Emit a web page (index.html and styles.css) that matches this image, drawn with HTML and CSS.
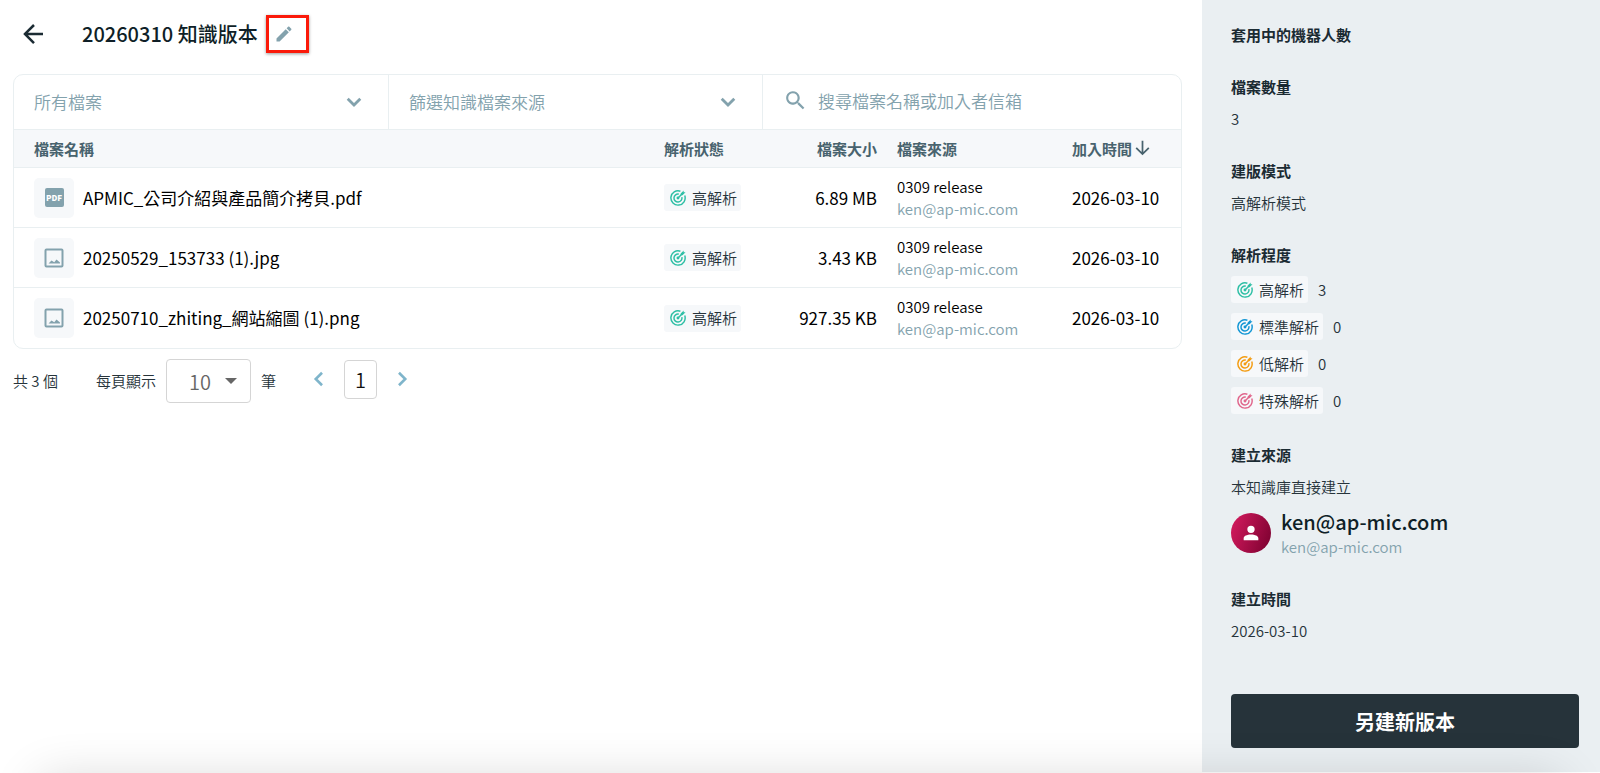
FILE: index.html
```
<!DOCTYPE html>
<html lang="zh-Hant">
<head>
    <meta charset="utf-8">
    <title>20260310 知識版本</title>
    <link rel="stylesheet" href="styles.css">
</head>
<body>
<!-- shared icons -->
<svg class="sprite" aria-hidden="true">
    <symbol id="icon-target" viewBox="0 0 24 24">
        <g fill="none" stroke="currentColor" stroke-width="2.200">
            <path d="M15.600 1.900A10.700 10.700 0 1 0 22.100 8.400"/>
            <path d="M13.300 6.200A6 6 0 1 0 17.800 10.700"/>
            <path d="M12 12L18 6"/>
        </g>
        <circle cx="12" cy="12" r="2.200" fill="currentColor"/>
        <path d="M16 5.200L20.500.700V3.500h2.800l-4.500 4.500H16z" fill="currentColor"/>
    </symbol>
    <symbol id="icon-image" viewBox="0 0 24 24">
        <path d="M19.500 19.500h-15v-15h15m0-2h-15a2 2 0 0 0-2 2v15a2 2 0 0 0 2 2h15a2 2 0 0 0 2-2v-15a2 2 0 0 0-2-2m-5 11l-2.250 2.800L9.500 14.500 6.500 17.500h11.500v-1z" fill="currentColor"/>
    </symbol>
    <symbol id="icon-chevron" viewBox="0 0 24 24">
        <path d="M6.200 9L12 14.800 17.800 9" fill="none" stroke="currentColor" stroke-width="2.600"/>
    </symbol>
</svg>
<div class="page">
    <main class="main">
        <header class="top-bar">
            <button class="icon-btn back-btn" type="button" aria-label="返回">
                <svg width="30" height="30" viewBox="0 0 24 24"><path d="M20 11v2H8l5.500 5.500-1.420 1.420L4.160 12l7.920-7.920L13.500 5.500 8 11z" fill="currentColor"/></svg>
            </button>
            <h1 class="page-title">20260310 知識版本</h1>
            <button class="icon-btn edit-btn" type="button" aria-label="編輯名稱">
                <svg width="20" height="20" viewBox="0 0 24 24"><path d="M20.710 7.040c.390-.390.390-1.040 0-1.410l-2.340-2.340c-.370-.390-1.020-.390-1.410 0l-1.840 1.830 3.750 3.750M3 17.250V21h3.750L17.810 9.930l-3.750-3.750z" fill="currentColor"/></svg>
            </button>
        </header>

        <section class="card">
            <div class="filters">
                <div class="filter">
                    <select class="filter-select" aria-label="檔案類型"><option>所有檔案</option></select>
                    <svg class="filter-arrow" width="26" height="26"><use href="#icon-chevron"/></svg>
                </div>
                <div class="filter">
                    <select class="filter-select" aria-label="檔案來源"><option>篩選知識檔案來源</option></select>
                    <svg class="filter-arrow" width="26" height="26"><use href="#icon-chevron"/></svg>
                </div>
                <div class="search">
                    <svg width="25" height="25" viewBox="0 0 24 24"><path d="M9.500 3a6.500 6.500 0 0 1 4.940 10.730l.270.270h.790l5 5-1.500 1.500-5-5v-.790l-.270-.270A6.500 6.500 0 1 1 9.500 3m0 2a4.500 4.500 0 1 0 0 9 4.500 4.500 0 0 0 0-9" fill="currentColor"/></svg>
                    <input class="search-input" type="text" aria-label="搜尋" placeholder="搜尋檔案名稱或加入者信箱">
                </div>
            </div>
            <table class="files">
                <thead>
                <tr>
                    <th class="col-name">檔案名稱</th>
                    <th class="col-status">解析狀態</th>
                    <th class="col-size">檔案大小</th>
                    <th class="col-source">檔案來源</th>
                    <th class="col-date">
                        <div class="sort">加入時間<svg width="21" height="21" viewBox="0 0 24 24"><path d="M11 3h2v13l5.500-5.500 1.420 1.420L12 19.840l-7.920-7.920L5.500 10.500 11 16z" fill="currentColor"/></svg></div>
                    </th>
                </tr>
                </thead>
                <tbody>
                <tr>
                    <td>
                        <div class="file">
                            <span class="file-icon"><span class="pdf">PDF</span></span>
                            APMIC_公司介紹與產品簡介拷貝.pdf
                        </div>
                    </td>
                    <td><span class="chip"><svg class="target high" width="16" height="16"><use href="#icon-target"/></svg>高解析</span></td>
                    <td class="col-size">6.89 MB</td>
                    <td>
                        <div class="source">0309 release</div>
                        <div class="source mail">ken@ap-mic.com</div>
                    </td>
                    <td>2026-03-10</td>
                </tr>
                <tr>
                    <td>
                        <div class="file">
                            <span class="file-icon"><svg width="24" height="24"><use href="#icon-image"/></svg></span>
                            20250529_153733 (1).jpg
                        </div>
                    </td>
                    <td><span class="chip"><svg class="target high" width="16" height="16"><use href="#icon-target"/></svg>高解析</span></td>
                    <td class="col-size">3.43 KB</td>
                    <td>
                        <div class="source">0309 release</div>
                        <div class="source mail">ken@ap-mic.com</div>
                    </td>
                    <td>2026-03-10</td>
                </tr>
                <tr>
                    <td>
                        <div class="file">
                            <span class="file-icon"><svg width="24" height="24"><use href="#icon-image"/></svg></span>
                            20250710_zhiting_網站縮圖 (1).png
                        </div>
                    </td>
                    <td><span class="chip"><svg class="target high" width="16" height="16"><use href="#icon-target"/></svg>高解析</span></td>
                    <td class="col-size">927.35 KB</td>
                    <td>
                        <div class="source">0309 release</div>
                        <div class="source mail">ken@ap-mic.com</div>
                    </td>
                    <td>2026-03-10</td>
                </tr>
                </tbody>
            </table>
        </section>

        <nav class="pager">
            <span class="total">共 3 個</span>
            <label for="pageSize">每頁顯示</label>
            <div class="page-size">
                <select id="pageSize" class="page-size-select"><option>10</option></select>
                <svg class="page-size-arrow" width="12" height="6" viewBox="0 0 12 6"><path d="M0 0h12L6 6z" fill="currentColor"/></svg>
            </div>
            <span>筆</span>
            <div class="pages">
                <button class="icon-btn page-arrow" type="button" aria-label="上一頁"><svg width="26" height="26" viewBox="0 0 24 24"><path d="M14.800 6.200L9 12l5.800 5.800" fill="none" stroke="currentColor" stroke-width="2.400"/></svg></button>
                <button class="page-num" type="button">1</button>
                <button class="icon-btn page-arrow" type="button" aria-label="下一頁"><svg width="26" height="26" viewBox="0 0 24 24"><path d="M9.200 6.200L15 12l-5.800 5.800" fill="none" stroke="currentColor" stroke-width="2.400"/></svg></button>
            </div>
        </nav>
    </main>

    <aside class="side">
        <section class="info">
            <h2 class="info-title">套用中的機器人數</h2>
        </section>
        <section class="info">
            <h2 class="info-title">檔案數量</h2>
            <p class="info-text">3</p>
        </section>
        <section class="info">
            <h2 class="info-title">建版模式</h2>
            <p class="info-text">高解析模式</p>
        </section>
        <section class="info">
            <h2 class="info-title">解析程度</h2>
            <div class="level"><span class="chip"><svg class="target high" width="16" height="16"><use href="#icon-target"/></svg>高解析</span>3</div>
            <div class="level"><span class="chip"><svg class="target standard" width="16" height="16"><use href="#icon-target"/></svg>標準解析</span>0</div>
            <div class="level"><span class="chip"><svg class="target low" width="16" height="16"><use href="#icon-target"/></svg>低解析</span>0</div>
            <div class="level"><span class="chip"><svg class="target special" width="16" height="16"><use href="#icon-target"/></svg>特殊解析</span>0</div>
        </section>
        <section class="info">
            <h2 class="info-title">建立來源</h2>
            <p class="info-text">本知識庫直接建立</p>
            <div class="user">
                <span class="avatar"><svg width="22" height="22" viewBox="0 0 24 24"><path d="M12 4a4 4 0 1 1 0 8 4 4 0 0 1 0-8m0 9.500c4.400 0 8 1.800 8 4V20H4v-2.500c0-2.200 3.600-4 8-4" fill="currentColor"/></svg></span>
                <div>
                    <div class="user-name">ken@ap-mic.com</div>
                    <div class="user-mail">ken@ap-mic.com</div>
                </div>
            </div>
        </section>
        <section class="info">
            <h2 class="info-title">建立時間</h2>
            <p class="info-text">2026-03-10</p>
        </section>
        <button class="create-btn" type="button">另建新版本</button>
    </aside>
</div>
<div class="bottom-edge"></div>
</body>
</html>
```
FILE: styles.css
```
* {
    box-sizing: border-box;
}

body {
    margin: 0;
    background-color: #fff;
    color: #26333a;
    font-family: "Noto Sans CJK TC", "Noto Sans", sans-serif;
    font-size: 15px;
    line-height: 22px;
    font-weight: 350;
}

button, input, select {
    font-family: inherit;
    font-weight: inherit;
    margin: 0;
}

svg {
    display: block;
    flex: none;
}

.sprite {
    position: absolute;
    width: 0;
    height: 0;
}

.page {
    display: flex;
    min-height: 100vh;
}

.main {
    flex: 1;
    padding: 0 20px 0 13px;
}

/* title */
.top-bar {
    display: flex;
    align-items: center;
    height: 74px;
    padding: 0 0 6px 5px;
}

.icon-btn {
    display: flex;
    align-items: center;
    padding: 0;
    border: none;
    background: none;
    cursor: pointer;
}

.back-btn {
    color: #1b2b33;
}

.page-title {
    margin: 0 8px 0 34px;
    font-size: 20px;
    line-height: 28px;
    font-weight: 500;
    color: #0f1f27;
}

.edit-btn {
    width: 43px;
    height: 38px;
    padding-left: 5px;
    border: 3px solid #fb1a0a;
    box-shadow: 0 1px 3px rgba(0, 0, 0, 0.4);
    color: #83a2ad;
}

/* files */
.card {
    border: 1px solid #e9eff1;
    border-radius: 10px;
    overflow: hidden;
}

.filters {
    display: grid;
    grid-template-columns: 375px 374px 1fr;
    height: 55px;
    border-bottom: 1px solid #e9eff1;
    color: #83a2ad;
}

.filter {
    position: relative;
    border-right: 1px solid #e9eff1;
}

.filter-select {
    width: 100%;
    height: 100%;
    padding: 0 56px 2px 20px;
    border: none;
    background: none;
    appearance: none;
    font-size: 17px;
    color: #83a2ad;
}

.filter-arrow {
    position: absolute;
    top: 14px;
    right: 21px;
    pointer-events: none;
}

.search {
    display: flex;
    align-items: center;
    gap: 10px;
    padding: 0 20px 4px;
}

.search-input {
    flex: 1;
    min-width: 0;
    padding: 0;
    border: none;
    outline: none;
    font-size: 17px;
    color: #26333a;
}

.search-input::placeholder {
    color: #83a2ad;
}

.files {
    width: 100%;
    table-layout: fixed;
    border-collapse: separate;
    border-spacing: 0;
}

.files th {
    height: 38px;
    padding: 0 0 0 20px;
    background-color: #f6f8fa;
    border-bottom: 1px solid #e9eff1;
    font-size: 15px;
    font-weight: 700;
    text-align: left;
    color: #48636e;
}

.files td {
    height: 60px;
    padding: 0 0 0 20px;
    border-bottom: 1px solid #e9eff1;
    font-size: 17px;
    font-weight: 400;
    color: #000;
}

.files tr:last-child td {
    border-bottom: none;
}

.files .col-size {
    width: 126px;
    text-align: right;
}

.col-status {
    width: 107px;
}

.col-source {
    width: 175px;
}

.col-date {
    width: 129px;
}

.sort {
    display: flex;
    align-items: center;
}

.file {
    display: flex;
    align-items: center;
    gap: 9px;
}

.file-icon {
    display: flex;
    align-items: center;
    justify-content: center;
    width: 40px;
    height: 40px;
    border-radius: 5px;
    background-color: #f6f8fa;
    color: #83a2ad;
}

.pdf {
    width: 19px;
    height: 19px;
    border-radius: 2px;
    background-color: #83a2ad;
    color: #fff;
    font-size: 8px;
    line-height: 19px;
    font-weight: 900;
    text-align: center;
}

.chip {
    display: inline-flex;
    align-items: center;
    gap: 6px;
    height: 27px;
    padding: 0 4px 0 6px;
    border-radius: 3px;
    background-color: #f6f8fa;
    font-size: 15px;
    font-weight: 350;
    color: #26333a;
    vertical-align: middle;
}

.high {
    color: #2ebfa5;
}

.standard {
    color: #1296d4;
}

.low {
    color: #f39c12;
}

.special {
    color: #e0668c;
}

.source {
    font-size: 15px;
    line-height: 22px;
    font-weight: 350;
}

.mail {
    color: #83a2ad;
}

/* pagination */
.pager {
    display: flex;
    align-items: center;
    gap: 10px;
    padding-top: 10px;
}

.total {
    margin-right: 28px;
}

.page-size {
    position: relative;
}

.page-size-select {
    width: 85px;
    height: 44px;
    padding: 0 0 0 22px;
    border: 1px solid #d5d5d5;
    border-radius: 4px;
    background: #fff;
    appearance: none;
    font-size: 20px;
    color: #666;
}

.page-size-arrow {
    position: absolute;
    top: 19px;
    right: 14px;
    color: #666;
    pointer-events: none;
}

.pages {
    display: flex;
    align-items: center;
    gap: 12px;
    margin-left: 20px;
    padding-bottom: 4px;
}

.page-arrow {
    color: #7fb5cb;
}

.page-num {
    width: 33px;
    height: 39px;
    padding: 0;
    border: 1px solid #d5d5d5;
    border-radius: 4px;
    background: #fff;
    font-size: 20px;
    color: #111;
}

/* version details */
.side {
    display: flex;
    flex-direction: column;
    gap: 30px;
    width: 398px;
    padding: 24px 21px 25px 29px;
    background-color: #eaeff2;
}

.info {
    display: flex;
    flex-direction: column;
    gap: 10px;
}

.info-title {
    margin: 0;
    font-size: 15px;
    line-height: 22px;
    font-weight: 700;
    color: #1b2b33;
}

.info-text {
    margin: 0;
}

.level {
    display: flex;
    align-items: center;
    gap: 10px;
}

.user {
    display: flex;
    align-items: center;
    gap: 10px;
}

.avatar {
    display: flex;
    align-items: center;
    justify-content: center;
    width: 40px;
    height: 40px;
    border-radius: 50%;
    background: linear-gradient(110deg, #d81b60, #78002e);
    color: #fff;
}

.user-name {
    font-size: 20px;
    line-height: 28px;
    font-weight: 500;
    color: #0f1f27;
}

.user-mail {
    color: #83a2ad;
}

.create-btn {
    height: 54px;
    margin-top: auto;
    border: none;
    border-radius: 4px;
    background-color: #26333a;
    font-size: 20px;
    font-weight: 700;
    color: #fff;
    cursor: pointer;
}

/* soft shade rising from the bottom of the window */
.bottom-edge {
    position: fixed;
    right: 0;
    bottom: 0;
    left: 0;
    height: 1px;
    background-color: #fff;
}

.bottom-edge::before {
    content: "";
    position: absolute;
    z-index: -1;
    top: 8px;
    right: 40px;
    left: 40px;
    height: 80px;
    box-shadow: 0 0 50px rgba(0, 0, 0, 0.16);
    pointer-events: none;
}
```
